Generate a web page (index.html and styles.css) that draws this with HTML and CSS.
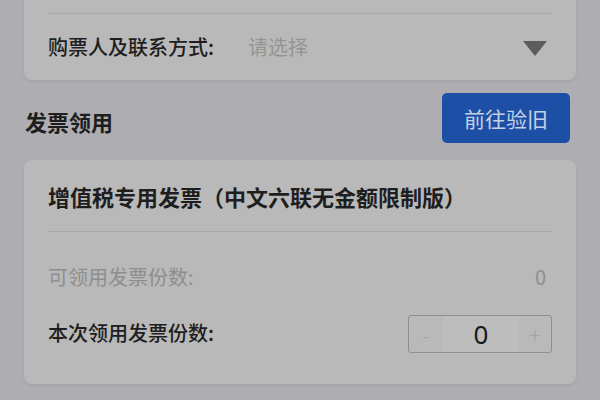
FILE: index.html
```html
<!DOCTYPE html>
<html lang="zh-CN">
<head>
<meta charset="utf-8">
<title>发票领用</title>
<link rel="stylesheet" href="styles.css">
</head>
<body>
<div class="page">
  <div class="card card-top">
    <div class="row row-select">
      <span class="label">购票人及联系方式:</span>
      <span class="placeholder">请选择</span>
      <svg class="caret" width="26" height="17" viewBox="0 0 26 17"><path d="M1 1 L25 1 L13 16 Z" fill="#5c5c5c"/></svg>
    </div>
  </div>

  <div class="section-head">
    <span class="section-title">发票领用</span>
    <button class="btn-primary">前往验旧</button>
  </div>

  <div class="card card-invoice">
    <div class="invoice-title">增值税专用发票（中文六联无金额限制版）</div>
    <div class="rows">
      <div class="row row-info">
        <span class="label muted">可领用发票份数:</span>
        <span class="value muted">0</span>
      </div>
      <div class="row row-info">
        <span class="label">本次领用发票份数:</span>
        <div class="stepper">
          <span class="step step-minus">-</span>
          <span class="step-value">0</span>
          <span class="step step-plus">+</span>
        </div>
      </div>
    </div>
  </div>
</div>
</body>
</html>
```

FILE: styles.css
```css
* { box-sizing: border-box; }
html, body {
  margin: 0;
  padding: 0;
  background: #adadb2;
  width: 600px;
  height: 400px;
  overflow: hidden;
  font-family: "Noto Sans CJK SC", "Noto Sans", sans-serif;
  color: #1e1e1e;
}
.page {
  padding: 0 24px;
}
.card {
  background: #b9b9b9;
  border-radius: 8px;
  box-shadow: 0 1px 3px rgba(0, 0, 0, 0.08);
  padding: 0 24px;
}
.card-top {
  border-radius: 0 0 8px 8px;
  padding-top: 13px;
}
.row {
  display: flex;
  align-items: center;
}
.row-select {
  border-top: 1px solid #a9a9a9;
  height: 67px;
}
.label {
  font-size: 20px;
  font-weight: 500;
  line-height: 1;
  color: #1e1e1e;
}
.placeholder {
  font-size: 20px;
  line-height: 1;
  color: #949494;
  margin-left: 34px;
}
.caret {
  margin-left: auto;
  margin-right: 4px;
  margin-top: 2px;
}
.section-head {
  display: flex;
  align-items: center;
  justify-content: space-between;
  height: 80px;
  padding: 13px 6px 17px 1px;
}
.section-title {
  font-size: 22px;
  font-weight: 700;
  line-height: 1;
  margin-top: 6px;
}
.btn-primary {
  width: 128px;
  height: 50px;
  border: none;
  border-radius: 5px;
  background: #1d4fa6;
  color: #c6d1e4;
  font-family: inherit;
  font-size: 21px;
  padding: 0;
}
.card-invoice {
  padding-bottom: 23px;
}
.invoice-title {
  height: 72px;
  display: flex;
  align-items: center;
  font-size: 22px;
  font-weight: 700;
  line-height: 1;
  padding-top: 1px;
  border-bottom: 1px solid #a9a9a9;
}
.rows {
  padding-top: 17px;
}
.row-info {
  height: 56px;
  justify-content: space-between;
}
.label.muted {
  font-weight: 400;
}
.muted {
  color: #8e8e8e;
}
.value {
  font-size: 20px;
  line-height: 1;
  margin-right: 6px;
}
.stepper {
  display: flex;
  width: 144px;
  height: 38px;
  border: 1px solid #8e8e8e;
  border-radius: 3px;
  overflow: hidden;
  margin-top: 2px;
}
.step {
  display: flex;
  align-items: center;
  justify-content: center;
  color: #a3a3a3;
  font-size: 22px;
  font-weight: 300;
}
.step-minus {
  width: 34px;
}
.step-plus {
  width: 32px;
}
.step-value {
  flex: 1;
  display: flex;
  align-items: center;
  justify-content: center;
  background: #bdbdbd;
  font-family: "Noto Sans", sans-serif;
  font-size: 26px;
  color: #1a1a1a;
}
```
